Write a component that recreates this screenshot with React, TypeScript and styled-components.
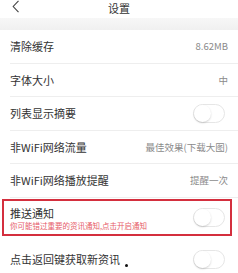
import React from 'react'
import styled, { createGlobalStyle } from 'styled-components'

const GlobalStyle = createGlobalStyle`
  html, body {
    margin: 0;
    padding: 0;
    background: #ffffff;
  }
  body {
    font-family: "Noto Sans CJK SC", "Noto Sans", sans-serif;
    color: #333333;
  }
`

type RowItem = {
  label: string
  value?: string
  toggle?: boolean
}

const rows: RowItem[] = [
  { label: '清除缓存', value: '8.62MB' },
  { label: '字体大小', value: '中' },
  { label: '列表显示摘要', toggle: true },
  { label: '非WiFi网络流量', value: '最佳效果(下载大图)' },
  { label: '非WiFi网络播放提醒', value: '提醒一次' },
]

const Toggle = () => (
  <Switch>
    <Knob />
  </Switch>
)

export default function App() {
  return (
    <>
      <GlobalStyle />
      <Page>
        <Header>
          <BackButton>
            <svg width="8" height="13" viewBox="0 0 8 13" fill="none">
              <path d="M6.5 0.8 L1.2 6.5 L6.5 12.2" stroke="#444" strokeWidth="1.1" />
            </svg>
          </BackButton>
          <Title>设置</Title>
        </Header>
        <Band />
        <List>
          {rows.map((row) => (
            <Row key={row.label}>
              <Label>{row.label}</Label>
              {row.value && <Value>{row.value}</Value>}
              {row.toggle && <Toggle />}
            </Row>
          ))}
        </List>
        <PushRow>
          <PushText>
            <Label>推送通知</Label>
            <Hint>你可能错过重要的资讯通知,点击开启通知</Hint>
          </PushText>
          <Toggle />
        </PushRow>
        <LastRow>
          <Label>
            点击返回键获取新资讯
            <Dot />
          </Label>
          <Toggle />
        </LastRow>
      </Page>
    </>
  )
}

const Page = styled.div`
  width: 238px;
  height: 273px;
  overflow: hidden;
  background: #ffffff;
`

const Header = styled.div`
  position: relative;
  height: 18px;
  display: flex;
  align-items: center;
  justify-content: center;
`

const BackButton = styled.div`
  position: absolute;
  left: 12px;
  top: 0px;
  display: flex;
`

const Title = styled.div`
  font-size: 11px;
  line-height: 14px;
  color: #333333;
  margin-top: -3px;
`

const Band = styled.div`
  height: 12px;
  background: linear-gradient(#f7f7f7, #f0f0f0);
`

const List = styled.div`
  display: flex;
  flex-direction: column;
`

const Row = styled.div`
  box-sizing: border-box;
  height: 33.5px;
  margin-left: 10px;
  padding-right: 10px;
  display: flex;
  align-items: center;
  justify-content: space-between;
  border-bottom: 1px solid #eeeeee;
`

const Label = styled.div`
  position: relative;
  font-size: 11px;
  line-height: 14px;
  color: #333333;
`

const Value = styled.div`
  font-size: 9.5px;
  line-height: 12px;
  color: #8a8a8a;
`

const Switch = styled.div`
  box-sizing: border-box;
  width: 32px;
  height: 19px;
  margin-right: 3px;
  border: 1px solid #e6e6e6;
  border-radius: 10px;
  background: #ffffff;
  display: flex;
  align-items: center;
`

const Knob = styled.div`
  width: 17px;
  height: 17px;
  border-radius: 50%;
  background: #ffffff;
  box-shadow: 0 1px 2px rgba(0, 0, 0, 0.18);
`

const PushRow = styled.div`
  box-sizing: border-box;
  height: 37px;
  margin: 1.5px 6px 0 2px;
  padding: 0 2px 0 6px;
  border: 2px solid #d42f3e;
  display: flex;
  align-items: center;
  justify-content: space-between;
`

const PushText = styled.div`
  display: flex;
  flex-direction: column;
  gap: 1px;
  margin-top: 1px;
`

const Hint = styled.div`
  font-size: 7.5px;
  line-height: 10px;
  color: #e65b68;
`

const LastRow = styled.div`
  height: 46px;
  margin-left: 10px;
  padding-right: 10px;
  display: flex;
  align-items: center;
  justify-content: space-between;
`

const Dot = styled.span`
  position: absolute;
  right: -8px;
  bottom: -1px;
  width: 3px;
  height: 3px;
  border-radius: 50%;
  background: #111111;
`
